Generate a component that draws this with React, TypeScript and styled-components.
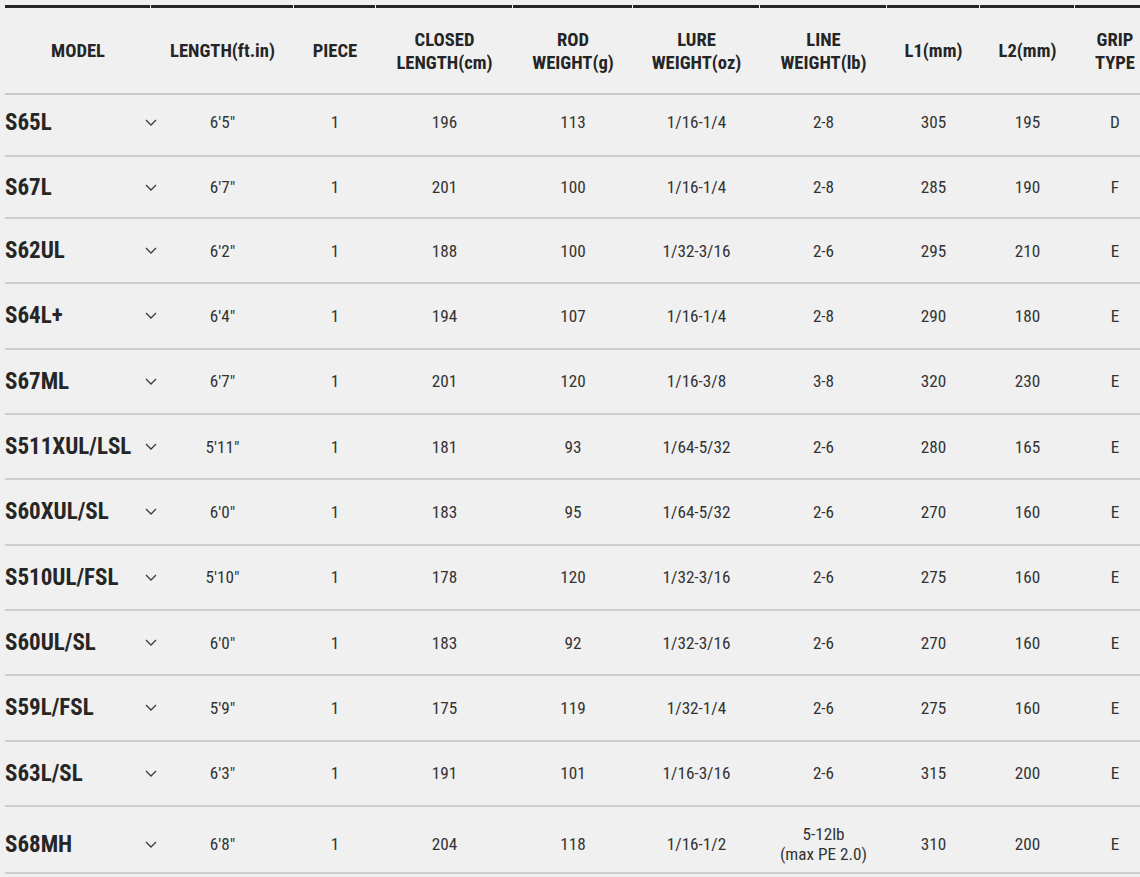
import React from 'react';
import styled, { createGlobalStyle } from 'styled-components';

const GlobalStyle = createGlobalStyle`
  html, body {
    margin: 0;
    padding: 0;
    background: #f0f0f0;
    overflow: hidden;
  }
  body {
    font-family: 'Roboto Condensed', 'Liberation Sans Narrow', 'DejaVu Sans Condensed', Roboto, sans-serif;
    color: #222;
  }
`;

const COLS = '146px 143px 82px 137px 120px 127px 127px 93px 95px 80px';

type Rod = {
  model: string;
  length: string;
  piece: string;
  closed: string;
  weight: string;
  lure: string;
  line: string[];
  l1: string;
  l2: string;
  grip: string;
};

const rods: Rod[] = [
  { model: 'S65L', length: `6'5"`, piece: '1', closed: '196', weight: '113', lure: '1/16-1/4', line: ['2-8'], l1: '305', l2: '195', grip: 'D' },
  { model: 'S67L', length: `6'7"`, piece: '1', closed: '201', weight: '100', lure: '1/16-1/4', line: ['2-8'], l1: '285', l2: '190', grip: 'F' },
  { model: 'S62UL', length: `6'2"`, piece: '1', closed: '188', weight: '100', lure: '1/32-3/16', line: ['2-6'], l1: '295', l2: '210', grip: 'E' },
  { model: 'S64L+', length: `6'4"`, piece: '1', closed: '194', weight: '107', lure: '1/16-1/4', line: ['2-8'], l1: '290', l2: '180', grip: 'E' },
  { model: 'S67ML', length: `6'7"`, piece: '1', closed: '201', weight: '120', lure: '1/16-3/8', line: ['3-8'], l1: '320', l2: '230', grip: 'E' },
  { model: 'S511XUL/LSL', length: `5'11"`, piece: '1', closed: '181', weight: '93', lure: '1/64-5/32', line: ['2-6'], l1: '280', l2: '165', grip: 'E' },
  { model: 'S60XUL/SL', length: `6'0"`, piece: '1', closed: '183', weight: '95', lure: '1/64-5/32', line: ['2-6'], l1: '270', l2: '160', grip: 'E' },
  { model: 'S510UL/FSL', length: `5'10"`, piece: '1', closed: '178', weight: '120', lure: '1/32-3/16', line: ['2-6'], l1: '275', l2: '160', grip: 'E' },
  { model: 'S60UL/SL', length: `6'0"`, piece: '1', closed: '183', weight: '92', lure: '1/32-3/16', line: ['2-6'], l1: '270', l2: '160', grip: 'E' },
  { model: 'S59L/FSL', length: `5'9"`, piece: '1', closed: '175', weight: '119', lure: '1/32-1/4', line: ['2-6'], l1: '275', l2: '160', grip: 'E' },
  { model: 'S63L/SL', length: `6'3"`, piece: '1', closed: '191', weight: '101', lure: '1/16-3/16', line: ['2-6'], l1: '315', l2: '200', grip: 'E' },
  { model: 'S68MH', length: `6'8"`, piece: '1', closed: '204', weight: '118', lure: '1/16-1/2', line: ['5-12lb', '(max PE 2.0)'], l1: '310', l2: '200', grip: 'E' },
];

const headers: string[][] = [
  ['MODEL'],
  ['LENGTH(ft.in)'],
  ['PIECE'],
  ['CLOSED', 'LENGTH(cm)'],
  ['ROD', 'WEIGHT(g)'],
  ['LURE', 'WEIGHT(oz)'],
  ['LINE', 'WEIGHT(lb)'],
  ['L1(mm)'],
  ['L2(mm)'],
  ['GRIP', 'TYPE'],
];

// row boxes as they came out of the original page: [height, padTop, padBottom]
const rowBox = (i: number): [number, number, number] => {
  if (i === 0) return [54, 0, 6];
  if (i === 1) return [60, 0, 0];
  if (i === rods.length - 1) return [55, 10, 0];
  return [63.33, 0, 0];
};

const Chevron = () => (
  <svg width="12" height="7" viewBox="0 0 12 7" fill="none">
    <path d="M1 1l5 5 5-5" stroke="#3a3a3a" strokeWidth="1.3" />
  </svg>
);

const App = () => (
  <>
    <GlobalStyle />
    <Page>
      <SpecTable>
        <HeadRow>
          {headers.map((h, i) => (
            <HeadCell key={i}>
              {h.map((t) => (
                <span key={t}>{t}</span>
              ))}
            </HeadCell>
          ))}
        </HeadRow>
        {rods.map((r, i) => {
          const [h, pt, pb] = rowBox(i);
          return (
            <BodyRow key={r.model} $height={h} $padTop={pt} $padBottom={pb}>
              <ModelCell>
                <span>{r.model}</span>
                <Toggle>
                  <Chevron />
                </Toggle>
              </ModelCell>
              <Cell>{r.length}</Cell>
              <Cell>{r.piece}</Cell>
              <Cell>{r.closed}</Cell>
              <Cell>{r.weight}</Cell>
              <Cell>{r.lure}</Cell>
              <Cell>
                {r.line.map((t) => (
                  <span key={t}>{t}</span>
                ))}
              </Cell>
              <Cell>{r.l1}</Cell>
              <Cell>{r.l2}</Cell>
              <Cell>{r.grip}</Cell>
            </BodyRow>
          );
        })}
      </SpecTable>
    </Page>
  </>
);

export default App;

const Page = styled.div`
  width: 1140px;
  height: 877px;
  overflow: hidden;
  padding: 5px 0 0 5px;
  box-sizing: border-box;
`;

const SpecTable = styled.div`
  width: 1150px;
  display: flex;
  flex-direction: column;
`;

const HeadRow = styled.div`
  display: grid;
  grid-template-columns: ${COLS};
  height: 88px;
  border-bottom: 2px solid #c9c9c9;
`;

const HeadCell = styled.div`
  position: relative;
  display: flex;
  flex-direction: column;
  align-items: center;
  justify-content: center;
  padding-top: 5px;
  font-size: 18.6px;
  font-weight: 700;
  line-height: 23px;
  color: #252525;
  text-align: center;
  &::before {
    content: '';
    position: absolute;
    top: 0;
    left: 0;
    right: 1px;
    height: 3px;
    background: #262626;
  }
`;

const BodyRow = styled.div<{ $height: number; $padTop: number; $padBottom: number }>`
  display: grid;
  grid-template-columns: ${COLS};
  height: ${(p) => p.$height}px;
  padding-top: ${(p) => p.$padTop}px;
  padding-bottom: ${(p) => p.$padBottom}px;
  border-bottom: 2px solid #cdcdcd;
`;

const Cell = styled.div`
  display: flex;
  flex-direction: column;
  align-items: center;
  justify-content: center;
  font-size: 17.2px;
  line-height: 20px;
  color: #333;
  text-align: center;
`;

const ModelCell = styled.div`
  display: flex;
  align-items: center;
  justify-content: space-between;
  font-size: 23px;
  font-weight: 700;
  color: #262626;
  white-space: nowrap;
`;

const Toggle = styled.span`
  display: flex;
  width: 12px;
  margin-right: -6px;
`;
